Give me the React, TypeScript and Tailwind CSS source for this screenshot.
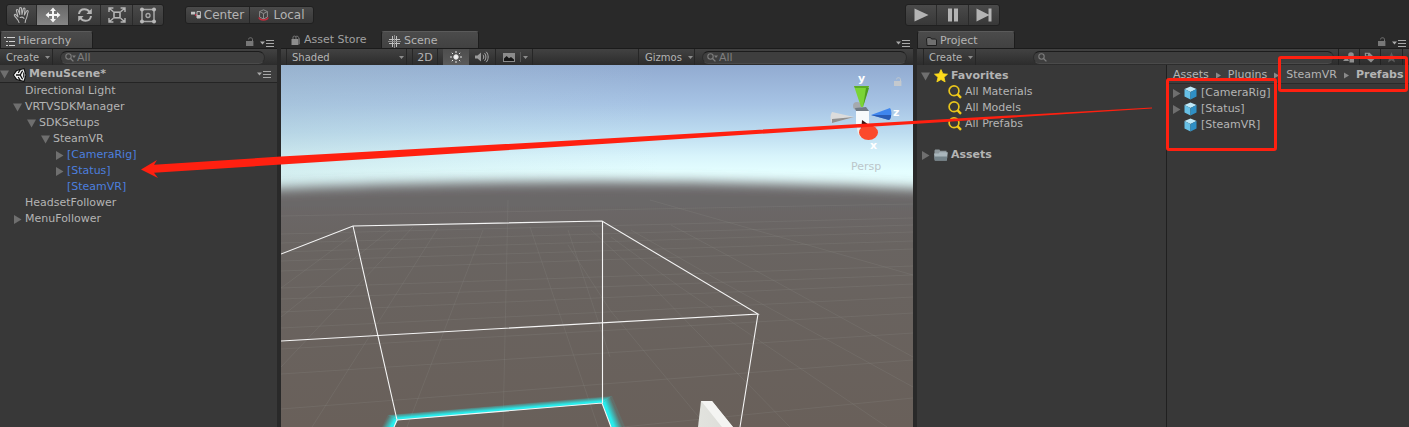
import React from 'react';

type IconProps = { className?: string };

function HandIcon() {
  return (
    <svg width="18" height="18" viewBox="0 0 18 18" fill="none" stroke="#b9b9b9" strokeWidth="1.1" strokeLinecap="round" strokeLinejoin="round">
      <path d="M6 16.5 C5.5 14 3 12 1.4 9.6 C1 8.6 2.2 8 3 8.8 L5 10.8 L3.4 4.6 C3.2 3.4 4.8 3 5.2 4.2 L6.8 8.6 L6.6 2.4 C6.7 1.1 8.3 1.1 8.5 2.4 L9 8.4 L10.3 2.8 C10.7 1.6 12.1 2 12 3.2 L11.4 9 L13.6 5 C14.3 4 15.6 4.8 15.1 5.9 C14 8.6 14.4 11.6 12.6 14 L12.2 16.5" />
      <path d="M7.2 11.5 C8.6 10.8 10 11.2 11 12.4" />
    </svg>
  );
}

function MoveIcon() {
  return (
    <svg width="16" height="16" viewBox="0 0 16 16" fill="#f4f4f4">
      <path d="M8 .5 L11 4 H9 V7 H12 V5 L15.5 8 L12 11 V9 H9 V12 H11 L8 15.5 L5 12 H7 V9 H4 V11 L.5 8 L4 5 V7 H7 V4 H5 Z" />
    </svg>
  );
}

function RotateIcon() {
  return (
    <svg width="16" height="16" viewBox="0 0 16 16" fill="none" stroke="#b5b5b5" strokeWidth="2">
      <path d="M2 7 C2.4 3.6 4.6 2.2 7.4 2.2 C9.8 2.2 11.4 3.2 12.6 5" />
      <path d="M14 9 C13.6 12.4 11.4 13.8 8.6 13.8 C6.2 13.8 4.6 12.8 3.4 11" />
      <path d="M14.8 1.6 V7 H9.4 Z M1.2 14.4 V9 H6.6 Z" fill="#b5b5b5" stroke="none" />
    </svg>
  );
}

function ScaleIcon() {
  return (
    <svg width="18" height="16" viewBox="0 0 18 16" fill="none" stroke="#b5b5b5" strokeWidth="1.4">
      <rect x="6" y="5.2" width="6" height="5.6" strokeWidth="1.6" />
      <path d="M1 5 V1 H5.4 M1.2 1.2 L5.4 4.8 M12.6 1 H17 V5 M16.8 1.2 L12.6 4.8 M1 11 V15 H5.4 M1.2 14.8 L5.4 11.2 M12.6 15 H17 V11 M16.8 14.8 L12.6 11.2" />
    </svg>
  );
}

function RectIcon() {
  return (
    <svg width="18" height="17" viewBox="0 0 18 17" fill="none" stroke="#a8a8a8" strokeWidth="1.5">
      <path d="M3 2.5 H15 V14.5 H3 Z" />
      <circle cx="9" cy="8.5" r="2" strokeWidth="1.3" />
      <g fill="#b9b9b9" stroke="none">
        <circle cx="3" cy="2.5" r="2" />
        <circle cx="15" cy="2.5" r="2" />
        <circle cx="3" cy="14.5" r="2" />
        <circle cx="15" cy="14.5" r="2" />
      </g>
    </svg>
  );
}

function PivotIcon() {
  return (
    <svg width="10" height="8" viewBox="0 0 10 8">
      <path d="M0 .8 H4.2 V3.6 H0 Z" fill="#c4c4c4" />
      <path d="M4 3 H6 V5 H4 Z" fill="#b02f45" />
      <path d="M6 .6 H9.4 V7 H6 Z" fill="none" stroke="#c4c4c4" strokeWidth="1" />
      <path d="M6 4 H9 V7 H6 Z" fill="#c4c4c4" />
    </svg>
  );
}

function LocalIcon() {
  return (
    <svg width="11" height="12" viewBox="0 0 11 12" fill="none">
      <path d="M5.5 .8 L9.4 2.6 V8 L5.5 10 L1.6 8 V2.6 Z M1.6 2.6 L5.5 4.6 L9.4 2.6 M5.5 4.6 V10" stroke="#8c8c8c" />
      <path d="M.8 8.4 C2 11.8 9 11.8 10.2 8.4" stroke="#c02c3c" strokeWidth="1.4" />
    </svg>
  );
}

function LockIcon({ className = 'text-[#777777]' }: IconProps) {
  return (
    <svg width="8" height="9" viewBox="0 0 8 9" className={className}>
      <path d="M6.5 4 V2.4 C6.5 .2 2.5 .2 2.5 2.4" fill="none" stroke="currentColor" strokeWidth="1" />
      <path d="M0 4 H7.4 V9 H0 Z" fill="currentColor" />
    </svg>
  );
}

function MenuIcon() {
  return (
    <svg width="14" height="7" viewBox="0 0 14 7">
      <path d="M0 1.6 H5 L2.5 4.4 Z" fill="#a8a8a8" />
      <path d="M6 .5 H14 M6 3.5 H14 M6 6.5 H14" stroke="#a8a8a8" />
    </svg>
  );
}

function ListIcon() {
  return (
    <svg width="11" height="9" viewBox="0 0 11 9" stroke="#d0d0d0" shapeRendering="crispEdges">
      <path d="M0 .5 H2 M3 .5 H11 M2 4.5 H4 M5 4.5 H11 M2 8.5 H4 M5 8.5 H11" />
    </svg>
  );
}

function StoreIcon() {
  return (
    <svg width="10" height="11" viewBox="0 0 10 11">
      <path d="M.5 4 H7 V10 H.5 Z" fill="#8d8d8d" />
      <path d="M7 4 L9 3 V9 L7 10 Z" fill="#666" />
      <path d="M2 4 V2 C2 .8 4.6 .8 5 2 V4 M4.4 2 C5 .8 7.4 1 7.6 2.4 V3.6" fill="none" stroke="#777" />
    </svg>
  );
}

function GridIcon() {
  return (
    <svg width="13" height="13" viewBox="0 0 13 13" stroke="#c0c0c0" shapeRendering="crispEdges">
      <path d="M4.5 1 V12 M8.5 1 V12 M1 4.5 H12 M1 8.5 H12" />
      <path d="M6.5 0 V13 M0 6.5 H13" stroke="#8a8a8a" />
    </svg>
  );
}

function TabFolderIcon() {
  return (
    <svg width="11" height="9" viewBox="0 0 11 9">
      <path d="M.5 2 L1.5 .5 H4.5 L5.5 2 H9.5 L10.5 3 V8.5 H1 Z" fill="#6f6f6f" stroke="#1e1e1e" />
    </svg>
  );
}

function Caret() {
  return (
    <svg width="5" height="3" viewBox="0 0 5 3" className="shrink-0">
      <path d="M0 0 H5 L2.5 3 Z" fill="#8d8d8d" />
    </svg>
  );
}

type FoldState = 'open' | 'closed' | 'none';

function Fold({ state }: { state: FoldState }) {
  return (
    <svg width="9" height="9" viewBox="0 0 9 9" className="shrink-0" fill="#6f6f6f">
      {state === 'open' && <path d="M0 0.5 H9 L4.5 8.5 Z" />}
      {state === 'closed' && <path d="M1 0 V9 L8.5 4.5 Z" />}
    </svg>
  );
}

function UnityIcon() {
  return (
    <svg width="14" height="14" viewBox="0 0 14 14">
      <path d="M0 7 L3 2.2 L11.4 0 L13.4 7 L11.4 14 L3 11.8 Z" fill="#0c0c0c" />
      <path d="M1 7 L4 3 L10.6 1.2 L12.4 7 L10.6 12.8 L4 11 Z" fill="#f2f2f2" />
      <path d="M7.2 7 L3 7 M7.2 7 L9.6 2.8 M7.2 7 L9.6 11.2" stroke="#0c0c0c" strokeWidth="1.3" />
      <path d="M5.2 5 L7.2 1.6 M5.2 9 L7.2 12.4 M10.8 4.6 V9.4" stroke="#0c0c0c" strokeWidth="1.2" />
    </svg>
  );
}

function SearchGlass({ menu }: { menu?: boolean }) {
  return (
    <svg width="11" height="9" viewBox="0 0 11 9" fill="none" className="shrink-0">
      <circle cx="3.5" cy="3.5" r="2.7" stroke="#7d7d7d" strokeWidth="1.1" />
      <path d="M5.5 5.5 L8.4 8.4" stroke="#7d7d7d" strokeWidth="1.3" />
      {menu && <path d="M7 2.5 H11 L9 5 Z" fill="#7d7d7d" />}
    </svg>
  );
}

function SunIcon() {
  return (
    <svg width="12" height="12" viewBox="0 0 12 12" stroke="#e6e6e6">
      <circle cx="6" cy="6" r="2.2" fill="#f4f4f4" />
      <path d="M6 0 V2 M6 10 V12 M0 6 H2 M10 6 H12 M1.8 1.8 L3 3 M9 9 L10.2 10.2 M10.2 1.8 L9 3 M3 9 L1.8 10.2" />
    </svg>
  );
}

function SpeakerIcon() {
  return (
    <svg width="14" height="12" viewBox="0 0 14 12" fill="none" stroke="#a9a9a9">
      <path d="M0 4.5 H2.5 L6 1.5 V10.5 L2.5 7.5 H0 Z" fill="#9a9a9a" stroke="none" />
      <path d="M8 3.8 C9 5 9 7 8 8.2 M9.6 2.2 C11.4 4.4 11.4 7.6 9.6 9.8 M11.2 .8 C13.8 3.6 13.8 8.4 11.2 11.2" />
    </svg>
  );
}

function PictureIcon() {
  return (
    <svg width="12" height="9" viewBox="0 0 12 9">
      <path d="M0 0 H12 V9 H0 Z" fill="#8b8b8b" />
      <path d="M1 8 V5.4 L3.6 3 L6 5.2 L8 4 L11 6.4 V8 Z" fill="#161616" />
    </svg>
  );
}

function StarIcon() {
  return (
    <svg width="14" height="14" viewBox="0 0 14 14">
      <path d="M7 .6 L8.9 4.8 L13.5 5.2 L10 8.3 L11.1 12.9 L7 10.5 L2.9 12.9 L4 8.3 L.5 5.2 L5.1 4.8 Z" fill="#fddb1c" stroke="#fddb1c" strokeWidth=".8" strokeLinejoin="round" />
    </svg>
  );
}

function QueryIcon() {
  return (
    <svg width="14" height="14" viewBox="0 0 14 14" fill="none">
      <circle cx="6" cy="5.8" r="4.9" stroke="#e8c51c" strokeWidth="1.7" />
      <path d="M9.4 9.2 L13 12.8" stroke="#f5cd17" strokeWidth="2.4" />
    </svg>
  );
}

function FolderIcon() {
  return (
    <svg width="14" height="12" viewBox="0 0 14 12">
      <path d="M.5 1.5 L1.2 .5 H5.4 L6.2 1.8 H12.5 V5 H.5 Z" fill="#8d979c" />
      <path d="M0 4.6 L4.6 4.4 L5.6 3.2 H13.8 L12.8 11.5 H.8 Z" fill="#a9b6bc" />
      <path d="M.3 7.5 H13.3 L12.8 11.5 H.8 Z" fill="#74838a" />
    </svg>
  );
}

function CubeIcon() {
  return (
    <svg width="13" height="14" viewBox="0 0 13 14">
      <path d="M6.5 .5 L12.5 3 L6.5 6 L.5 3 Z" fill="#bfe9f8" />
      <path d="M.5 3 L6.5 6 V13.5 L.5 10.4 Z" fill="#67c0e6" />
      <path d="M12.5 3 L6.5 6 V13.5 L12.5 10.4 Z" fill="#2f8fc4" />
    </svg>
  );
}

function TypeFilterIcon() {
  return (
    <svg width="12" height="11" viewBox="0 0 12 11" fill="#8f8f8f">
      <circle cx="8" cy="3" r="2.8" />
      <path d="M0 9 L4 4.6 L6 9 Z M6.5 6.2 H11 V10.6 H6.5 Z" />
    </svg>
  );
}

function TagIcon() {
  return (
    <svg width="12" height="11" viewBox="0 0 12 11">
      <path d="M.8 .8 H5.6 L11.2 6.2 L7 10.4 L.8 5 Z" fill="#8f8f8f" />
      <circle cx="3" cy="2.8" r="1" fill="#333" />
    </svg>
  );
}

function SaveStarIcon() {
  return (
    <svg width="11" height="11" viewBox="0 0 11 11">
      <path d="M5.5 0 L7 3.8 L11 4 L7.9 6.5 L9 10.5 L5.5 8.2 L2 10.5 L3.1 6.5 L0 4 L4 3.8 Z" fill="#5c5c5c" />
    </svg>
  );
}

const toolShell = 'flex items-stretch overflow-hidden rounded-[3px] border border-[#202020] bg-linear-to-b from-[#4a4a4a] to-[#383838]';

function MainToolbar() {
  const tools = [
    { name: 'Hand', icon: <HandIcon /> },
    { name: 'Move', icon: <MoveIcon />, on: true },
    { name: 'Rotate', icon: <RotateIcon /> },
    { name: 'Scale', icon: <ScaleIcon /> },
    { name: 'Rect', icon: <RectIcon /> },
  ];
  return (
    <header className="flex h-[31px] shrink-0 items-center pb-px pl-1.5">
      <div className={`h-[22px] ${toolShell}`}>
        {tools.map((t) => (
          <button
            key={t.name}
            aria-label={t.name}
            aria-pressed={!!t.on}
            className={`flex w-8 items-center justify-center border-r border-[#2a2a2a] first:w-[30px] last:w-[30px] last:border-r-0 ${t.on ? 'bg-linear-to-b from-[#686868] to-[#858585]' : ''}`}
          >
            {t.icon}
          </button>
        ))}
      </div>
      <div className={`ml-[21px] h-[18px] text-[12px] ${toolShell}`}>
        <button className="flex w-16 items-center justify-center gap-[3px] border-r border-[#262626]">
          <PivotIcon />
          Center
        </button>
        <button className="flex w-[63px] items-center justify-center gap-1">
          <LocalIcon />
          Local
        </button>
      </div>
      <div className={`mr-[409px] ml-auto h-[22px] ${toolShell}`}>
        <button aria-label="Play" className="flex w-[31px] items-center justify-center border-r border-[#2a2a2a]">
          <svg width="15" height="14" viewBox="0 0 15 14" fill="#b4b4b4"><path d="M.5 .5 L14.5 7 L.5 13.5 Z" /></svg>
        </button>
        <button aria-label="Pause" className="flex w-8 items-center justify-center border-r border-[#2a2a2a]">
          <svg width="10" height="14" viewBox="0 0 10 14" fill="#b4b4b4"><path d="M0 .5 H4 V13.5 H0 Z M6 .5 H10 V13.5 H6 Z" /></svg>
        </button>
        <button aria-label="Step" className="flex w-[30px] items-center justify-center">
          <svg width="16" height="14" viewBox="0 0 16 14" fill="#b4b4b4"><path d="M.5 .5 L12.5 6.6 V.5 H15.5 V13.5 H12.5 V7.4 L.5 13.5 Z" /></svg>
        </button>
      </div>
    </header>
  );
}

function Tab({ icon, label, width, active }: { icon: React.ReactNode; label: string; width: string; active?: boolean }) {
  return (
    <button
      className={`flex h-full items-center gap-[3px] pt-0.5 text-[11px] ${width} ${
        active ? 'rounded-t-[3px] border-x border-t border-[#1d1d1d] border-t-[#5a5a5a] bg-linear-to-b from-[#4b4b4b] to-[#414141]' : 'text-[#a0a0a0]'
      }`}
    >
      {icon}
      {label}
    </button>
  );
}

function TabBar({ children, locked }: { children: React.ReactNode; locked?: boolean }) {
  return (
    <div className="flex h-[17px] items-stretch">
      {children}
      <div className="ml-auto flex items-end gap-1.5 pr-[3px]">
        {locked && <button aria-label="Lock" className="pb-0.5"><LockIcon /></button>}
        <button aria-label="Panel menu" className="pb-px"><MenuIcon /></button>
      </div>
    </div>
  );
}

const strip = 'flex h-[17px] items-stretch border-t border-[#1b1b1b] bg-linear-to-b from-[#424242] to-[#2c2c2c] text-[10px]';

function Search({ label, placeholder, menu, className }: { label: string; placeholder?: string; menu?: boolean; className: string }) {
  return (
    <label className={`flex h-[13px] items-center gap-px self-center rounded-full border border-t-[#1c1c1c] border-x-[#2b2b2b] border-b-[#4a4a4a] bg-[#3e3e3e] pl-1 ${className}`}>
      <SearchGlass menu={menu} />
      <input
        type="text"
        aria-label={label}
        placeholder={placeholder}
        className="h-[11px] w-full min-w-0 bg-transparent text-[11px] leading-none text-[#b4b4b4] outline-none placeholder:text-[#7f7f7f]"
      />
    </label>
  );
}

const hierarchy: { name: string; depth: string; fold: FoldState; prefab?: boolean }[] = [
  { name: 'Directional Light', depth: 'pl-[13px]', fold: 'none' },
  { name: 'VRTVSDKManager', depth: 'pl-[13px]', fold: 'open' },
  { name: 'SDKSetups', depth: 'pl-[27px]', fold: 'open' },
  { name: 'SteamVR', depth: 'pl-[41px]', fold: 'open' },
  { name: '[CameraRig]', depth: 'pl-[55px]', fold: 'closed', prefab: true },
  { name: '[Status]', depth: 'pl-[55px]', fold: 'closed', prefab: true },
  { name: '[SteamVR]', depth: 'pl-[55px]', fold: 'none', prefab: true },
  { name: 'HeadsetFollower', depth: 'pl-[13px]', fold: 'none' },
  { name: 'MenuFollower', depth: 'pl-[13px]', fold: 'closed' },
];

function HierarchyPanel() {
  return (
    <section className="flex w-[277px] shrink-0 flex-col">
      <TabBar locked>
        <Tab active width="w-[93px] pl-[3px]" icon={<ListIcon />} label="Hierarchy" />
      </TabBar>
      <div className={strip}>
        <button className="flex w-[53px] items-center gap-1.5 border-r border-[#262626] pl-1.5">
          Create <Caret />
        </button>
        <Search label="Search hierarchy" placeholder="All" menu className="mr-3 ml-[7px] flex-1" />
      </div>
      <div className="flex flex-1 flex-col bg-[#383838]">
        <div className="flex h-[18px] items-center border-b border-[#242424] bg-[#3e3e3e] pt-0.5 pr-1.5 text-[11px] font-bold">
          <Fold state="open" />
          <span className="mr-0.5 ml-1"><UnityIcon /></span>
          MenuScene*
          <button aria-label="Scene menu" className="ml-auto"><MenuIcon /></button>
        </div>
        <ul>
          {hierarchy.map((row) => (
            <li key={row.name} className={row.depth}>
              <button className={`flex h-4 items-center gap-[3px] text-[11px] ${row.prefab ? 'text-[#4c7fde]' : ''}`}>
                <Fold state={row.fold} />
                {row.name}
              </button>
            </li>
          ))}
        </ul>
      </div>
    </section>
  );
}

const floorLines = [
  'M0 151 L632 139', 'M0 169 L632 153', 'M0 178 L632 160', 'M0 187 L632 167', 'M0 196 L632 176',
  'M0 206 L632 184', 'M0 223 L632 201', 'M0 234 L632 210', 'M0 247 L632 219', 'M0 263 L632 232', 'M0 284 L632 248',
  'M0 309 L632 268', 'M0 344 L632 295', 'M342 362 L632 333',
  'M227 135 L222 362', 'M31 362 L157 163', 'M126 362 L202 165', 'M317 362 L249 162', 'M329 292 L287 165',
  'M0 302 L132 162', 'M0 252 L109 165', 'M0 223 L72 170', 'M426 362 L329 245 L287 180', 'M509 362 L372 222 L310 165',
  'M606 362 L399 222 L330 172', 'M632 322 L432 212 L350 165', 'M632 292 L459 197 L390 160', 'M632 210 L369 135',
];

function SceneView() {
  return (
    <div className="relative min-h-0 flex-1 overflow-hidden bg-[#69605a]">
      <svg className="absolute inset-0 h-full w-full" viewBox="0 0 632 362" preserveAspectRatio="xMidYMin slice" aria-label="Scene view">
        <defs>
          <linearGradient id="sky" x1="0" y1="0" x2="0" y2="130" gradientUnits="userSpaceOnUse">
            <stop offset="0" stopColor="#92abd1" />
            <stop offset=".3" stopColor="#a6c3e4" />
            <stop offset=".52" stopColor="#bddcf0" />
            <stop offset=".7" stopColor="#d8f4fb" />
            <stop offset=".82" stopColor="#e4feff" />
            <stop offset="1" stopColor="#e2f8f8" />
          </linearGradient>
          <linearGradient id="haze" x1="0" y1="0" x2="1" y2="0">
            <stop offset="0" stopColor="#a8c4c8" stopOpacity=".28" />
            <stop offset=".6" stopColor="#c0dce0" stopOpacity="0" />
          </linearGradient>
          <linearGradient id="ground" x1="0" y1="120" x2="0" y2="362" gradientUnits="userSpaceOnUse">
            <stop offset="0" stopColor="#6c686a" />
            <stop offset=".25" stopColor="#696461" />
            <stop offset="1" stopColor="#69605a" />
          </linearGradient>
          <filter id="horizon" x="-5%" y="-10%" width="110%" height="120%"><feGaussianBlur stdDeviation="6" /></filter>
          <linearGradient id="glowTop" x1="219" y1="346.5" x2="218.5" y2="340.5" gradientUnits="userSpaceOnUse">
            <stop offset=".3" stopColor="#28ecec" />
            <stop offset="1" stopColor="#28ecec" stopOpacity=".15" />
          </linearGradient>
          <linearGradient id="glowRight" x1="325" y1="350" x2="335" y2="346" gradientUnits="userSpaceOnUse">
            <stop offset=".3" stopColor="#28ecec" />
            <stop offset="1" stopColor="#28ecec" stopOpacity=".1" />
          </linearGradient>
          <linearGradient id="glowLeft" x1="115" y1="359" x2="106" y2="354" gradientUnits="userSpaceOnUse">
            <stop offset=".3" stopColor="#28ecec" />
            <stop offset="1" stopColor="#28ecec" stopOpacity=".1" />
          </linearGradient>
          <linearGradient id="wall" x1="0" y1="0" x2="1" y2="0">
            <stop offset="0" stopColor="#e2e3de" />
            <stop offset="1" stopColor="#dcdcd8" />
          </linearGradient>
        </defs>
        <path d="M0 0 H632 V362 H0 Z" fill="url(#sky)" />
        <path d="M0 0 H632 V140 H0 Z" fill="url(#haze)" />
        <path d="M-30 125 Q320 108 662 125 V400 H-30 Z" fill="url(#ground)" filter="url(#horizon)" />
        <path d="M-30 145 H662 V362 H-30 Z" fill="url(#ground)" />
        <g fill="none" stroke="#8f918c" strokeOpacity=".2" strokeWidth="1">
          {floorLines.map((d) => <path key={d} d={d} />)}
        </g>
        <path d="M117 355 L321 338 L331 331 L107 350 Z" fill="url(#glowTop)" />
        <path d="M321 338 L331 331 L344 362 H330 Z" fill="url(#glowRight)" />
        <path d="M117 355 L107 350 L101 362 H113 Z" fill="url(#glowLeft)" />
        <g fill="none" stroke="#f5f5f5" strokeWidth="1.1">
          <path d="M0 189 L72 161 L321 156 L477 249 L0 276" />
          <path d="M72 161 L116 355 L113 362 M116 355 L321 338 L330 362 M321.5 156 V338 M477 249 L459 362" />
        </g>
        <path d="M420 336 L431 336 L452 362 H417 Z" fill="url(#wall)" />
        <path d="M420 336 L431 336 L452 362 H441 L421 337 Z" fill="#f4f4f2" />
        <g>
          <circle cx="576" cy="41" r="4" fill="#a5a9ae" />
          <path d="M551 47 L573 52 L551 58 C549 55 549 50 551 47 Z" fill="#dcdcdc" />
          <path d="M551 54 L573 52 L551 58 Z" fill="#909090" />
          <path d="M573 21 H588 L582 42 H580 Z" fill="#7ad436" />
          <path d="M573 21 H588 L587 23 H574 Z" fill="#5cab26" />
          <path d="M585 23 H588 L582 42 Z" fill="#4f9d20" />
          <path d="M609 43 L590 50 L608 55 C611 52 611 46 609 43 Z" fill="#3f86ee" />
          <path d="M590 50 L608 55 C610 54 610 51 610 50 Z" fill="#2a5cb4" />
          <path d="M574 43 L585 42 L588 46 H575 Z" fill="#707a84" />
          <path d="M575 46 H588 V59 H575 Z" fill="#f7fafb" />
          <path d="M576 62 L581 64 L580 73 C577 70 576 66 576 62 Z" fill="#e9eeee" />
          <path d="M581 55 L591 62 L580 68 Z" fill="#3b1815" />
          <ellipse cx="587.500" cy="67.500" rx="9.500" ry="7.500" fill="#fb4a2c" />
        </g>
        <g fill="#fff" fontFamily="DejaVu Sans, sans-serif" fontWeight="700" fontSize="11">
          <text x="577" y="17">y</text>
          <text x="612" y="51">z</text>
          <text x="589" y="84">x</text>
        </g>
        <text x="570" y="105" fill="#bcc6ca" fontFamily="DejaVu Sans, sans-serif" fontSize="11">Persp</text>
        <g transform="translate(613 12)" fill="none" stroke="#c4c9ce">
          <path d="M6.500 4 V2.400 C6.500 .2 2.500 .2 2.500 2.400" />
          <path d="M0 4 H7.400 V9 H0 Z" fill="#c4c9ce" stroke="none" />
        </g>
      </svg>
    </div>
  );
}

function ScenePanel() {
  return (
    <section className="flex min-w-0 flex-1 flex-col">
      <TabBar>
        <Tab width="w-[100px] pl-2.5" icon={<StoreIcon />} label="Asset Store" />
        <Tab active width="w-[98px] pl-1.5" icon={<GridIcon />} label="Scene" />
      </TabBar>
      <div className={strip}>
        <label className="ml-[5px] flex w-[121px] items-center border-x border-[#262626] pr-0.5">
          <select aria-label="Draw mode" className="h-full min-w-0 flex-1 appearance-none bg-transparent pl-[5px] outline-none">
            <option>Shaded</option>
          </select>
          <Caret />
        </label>
        <button className="ml-[5px] w-[26px] border-x border-[#262626] text-[11px] leading-none">2D</button>
        <button aria-label="Scene lighting" aria-pressed className="ml-[5px] flex w-[26px] items-center justify-center bg-linear-to-b from-[#4e4e4e] to-[#5a5a5a]"><SunIcon /></button>
        <button aria-label="Scene audio" className="flex w-[27px] items-center justify-center border-r border-[#262626]"><SpeakerIcon /></button>
        <button aria-label="Scene effects" className="flex w-[37px] items-center gap-[5px] border-r border-[#262626] pl-[7px]">
          <PictureIcon />
          <span className="flex h-2.5 items-center border-l border-[#555] pl-0.5"><Caret /></span>
        </button>
        <button className="ml-auto flex w-[57px] items-center gap-1.5 border-x border-[#262626] pl-1.5">
          Gizmos <Caret />
        </button>
        <Search label="Search scene" placeholder="All" menu className="mr-1.5 ml-[7px] w-[205px]" />
      </div>
      <SceneView />
    </section>
  );
}

function Chevron() {
  return (
    <svg width="7" height="7" viewBox="0 0 7 7" className="shrink-0"><path d="M1 0.500 V6.500 L6 3.500 Z" fill="#8a8a8a" /></svg>
  );
}

function ProjectPanel() {
  const assets: { name: string; fold: FoldState }[] = [
    { name: '[CameraRig]', fold: 'closed' },
    { name: '[Status]', fold: 'closed' },
    { name: '[SteamVR]', fold: 'none' },
  ];
  return (
    <section className="flex w-[492px] shrink-0 flex-col">
      <TabBar locked>
        <Tab active width="w-[98px] pl-2" icon={<TabFolderIcon />} label="Project" />
      </TabBar>
      <div className={strip}>
        <button className="ml-1.5 flex w-[53px] items-center gap-1.5 border-x border-[#262626] pl-[5px]">
          Create <Caret />
        </button>
        <Search label="Search project" className="mr-1 ml-auto w-[301px]" />
        <button aria-label="Search by type" className="flex w-[21px] items-center justify-center border-l border-[#222]"><TypeFilterIcon /></button>
        <button aria-label="Search by label" className="flex w-[21px] items-center justify-center border-l border-[#222]"><TagIcon /></button>
        <button aria-label="Save search" className="mr-1.5 flex w-[23px] items-center justify-center border-x border-[#222]"><SaveStarIcon /></button>
      </div>
      <div className="flex flex-1 text-[11px]">
        <div className="w-[249px] shrink-0 bg-[#383838] pt-[3px] pl-1">
          <button className="flex h-4 items-center font-bold">
            <Fold state="open" />
            <span className="mr-[3px] ml-1"><StarIcon /></span>
            Favorites
          </button>
          <ul className="pl-[27px]">
            {['All Materials', 'All Models', 'All Prefabs'].map((name) => (
              <li key={name}>
                <button className="flex h-4 items-center gap-[3px]"><QueryIcon />{name}</button>
              </li>
            ))}
          </ul>
          <button className="mt-[15px] flex h-4 items-center font-bold">
            <Fold state="closed" />
            <span className="mr-[3px] ml-1"><FolderIcon /></span>
            Assets
          </button>
        </div>
        <div className="min-w-0 flex-1 border-l border-[#202020] bg-[#383838]">
          <nav className="flex h-[19px] items-center gap-1.5 border-b border-[#2a2a2a] bg-[#3e3e3e] pt-[3px] pl-1.5">
            <a href="#assets">Assets</a>
            <Chevron />
            <a href="#plugins">Plugins</a>
            <Chevron />
            <a href="#steamvr">SteamVR</a>
            <Chevron />
            <a href="#prefabs" className="font-bold">Prefabs</a>
          </nav>
          <ul className="pt-px">
            {assets.map((a) => (
              <li key={a.name} className="pl-[5px]">
                <button className="flex h-4 items-center gap-1"><span className="flex items-center gap-[3px]"><Fold state={a.fold} /><CubeIcon /></span>{a.name}</button>
              </li>
            ))}
          </ul>
        </div>
      </div>
    </section>
  );
}

function Annotations() {
  return (
    <div className="pointer-events-none absolute inset-0">
      <svg className="absolute inset-0 h-full w-full" aria-hidden="true">
        <path d="M141 169.500 L157 160 L154 164.800 L281 156.600 L610 138.200 L1152 107.500 L1152 108.500 L610 143.500 L281 164.600 L154 172.800 L158 178 Z" fill="#ff2010" />
      </svg>
      <div className="absolute top-[78px] right-[132px] h-[73px] w-[111px] rounded-[3px] border-3 border-[#ff2010]" />
      <div className="absolute top-[56px] right-px h-9 w-[130px] rounded-[3px] border-3 border-[#ff2010]" />
    </div>
  );
}

export default function App() {
  return (
    <div className="relative flex min-h-screen flex-col overflow-hidden bg-[#292929] font-['DejaVu_Sans',sans-serif] text-[#b4b4b4]">
      <MainToolbar />
      <main className="flex flex-1 items-stretch gap-1">
        <HierarchyPanel />
        <ScenePanel />
        <ProjectPanel />
      </main>
      <Annotations />
    </div>
  );
}
